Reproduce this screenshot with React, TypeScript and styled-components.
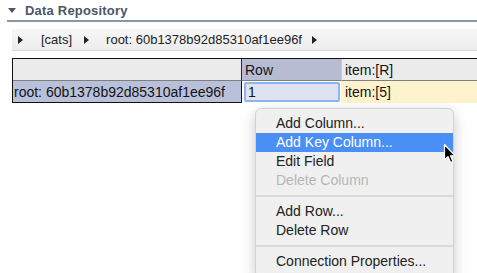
import React from "react";
import styled, { createGlobalStyle } from "styled-components";

const Global = createGlobalStyle`
  html, body { margin: 0; padding: 0; background: #ffffff; }
  body { font-family: "Liberation Sans", Arial, sans-serif; color: #1e1e1e; }
`;

const Page = styled.div`
  position: relative;
  width: 477px;
  height: 273px;
  overflow: hidden;
  background: #fff;
`;

const SectionHeader = styled.div`
  display: flex;
  align-items: center;
  gap: 9px;
  height: 22px;
  margin-left: 7px;
  padding-left: 1px;
  border-bottom: 2px solid #8b97a5;
  box-sizing: border-box;
  padding-top: 1px;
`;

const SectionTitle = styled.span`
  font-size: 13px;
  font-weight: 700;
  color: #4b5565;
  letter-spacing: 0.2px;
`;

const Breadcrumb = styled.div`
  display: flex;
  align-items: center;
  height: 22px;
  margin: 7px 0 0 12px;
  padding-left: 6px;
  background: linear-gradient(#f7f7f7, #ededed);
  border-bottom: 1px solid #d4d4d4;
  box-sizing: border-box;
  font-size: 13px;
  color: #222;
`;

const Crumb = styled.span<{ $gap: number }>`
  margin-left: ${(p) => p.$gap}px;
`;

const Arrow = styled.span<{ $gap: number }>`
  margin-left: ${(p) => p.$gap}px;
  width: 0;
  height: 0;
  border-top: 4px solid transparent;
  border-bottom: 4px solid transparent;
  border-left: 5px solid #222;
`;

const Table = styled.div`
  display: grid;
  grid-template-columns: 228px 100px 1fr;
  margin: 7px 0 0 12px;
  border-top: 1px solid #111;
  border-left: 1px solid #111;
  font-size: 14px;
  color: #141414;
`;

const HeadCell = styled.div<{ $tone?: "col" | "plain"; $sep?: "dark" | "light" | "none" }>`
  height: 22px;
  box-sizing: border-box;
  display: flex;
  align-items: center;
  padding-left: 3px;
  background: ${(p) => (p.$tone === "col" ? "#b7bcd3" : "#ebebeb")};
  border-bottom: 1px solid #7f7f7f;
  border-left: ${(p) =>
    p.$sep === "dark" ? "1px solid #2a2a2a" : p.$sep === "light" ? "1px solid #c8c8c8" : "none"};
`;

const RowCell = styled.div<{ $kind: "key" | "edit" | "value" }>`
  height: 22px;
  box-sizing: border-box;
  display: flex;
  align-items: center;
  padding-left: ${(p) => (p.$kind === "key" ? 1 : 4)}px;
  background: ${(p) =>
    p.$kind === "key" ? "#b9c0d9" : p.$kind === "value" ? "#fef3cc" : "#ffffff"};
  border-bottom: ${(p) => (p.$kind === "key" ? "1px solid #111" : "none")};
  border-left: ${(p) => (p.$kind === "edit" ? "1px solid #111" : "none")};
`;

const EditBox = styled.div`
  flex: 1;
  align-self: stretch;
  margin: 1px 1px 1px -2px;
  border: 2px solid #8db6ef;
  border-radius: 2px;
  background: #dfe3f1;
  display: flex;
  align-items: center;
  padding-left: 2px;
`;

const Menu = styled.div`
  position: absolute;
  left: 255px;
  top: 108px;
  width: 199px;
  padding-top: 5px;
  padding-bottom: 6px;
  background: #f0f0f0;
  border: 1px solid #d2d2d2;
  border-radius: 6px;
  box-shadow: 0 5px 14px rgba(0, 0, 0, 0.22);
  font-size: 14px;
  box-sizing: border-box;
`;

const Item = styled.div<{ $active?: boolean; $disabled?: boolean }>`
  height: 19px;
  line-height: 19px;
  padding-left: 20px;
  background: ${(p) => (p.$active ? "#4a8ff6" : "transparent")};
  color: ${(p) => (p.$active ? "#ffffff" : p.$disabled ? "#b6b6b6" : "#222222")};
`;

const Separator = styled.div`
  height: 2px;
  background: #dadada;
  margin: 5px 0 5px;
`;

const Cursor = styled.svg`
  position: absolute;
  left: 443px;
  top: 143px;
`;

const DownTri = () => (
  <svg width="8" height="5" viewBox="0 0 8 5">
    <path d="M0 0 L8 0 L4 5 Z" fill="#4b5565" />
  </svg>
);

export default function App() {
  return (
    <Page>
      <Global />
      <SectionHeader>
        <DownTri />
        <SectionTitle>Data Repository</SectionTitle>
      </SectionHeader>
      <Breadcrumb>
        <Arrow $gap={0} />
        <Crumb $gap={18}>[cats]</Crumb>
        <Arrow $gap={12} />
        <Crumb $gap={17}>root: 60b1378b92d85310af1ee96f</Crumb>
        <Arrow $gap={10} />
      </Breadcrumb>
      <Table>
        <HeadCell />
        <HeadCell $tone="col" $sep="dark">Row</HeadCell>
        <HeadCell $sep="light">item:[R]</HeadCell>
        <RowCell $kind="key">root: 60b1378b92d85310af1ee96f</RowCell>
        <RowCell $kind="edit">
          <EditBox>1</EditBox>
        </RowCell>
        <RowCell $kind="value">item:[5]</RowCell>
      </Table>
      <Menu>
        <Item>Add Column...</Item>
        <Item $active>Add Key Column...</Item>
        <Item>Edit Field</Item>
        <Item $disabled>Delete Column</Item>
        <Separator />
        <Item>Add Row...</Item>
        <Item>Delete Row</Item>
        <Separator />
        <Item>Connection Properties...</Item>
      </Menu>
      <Cursor width="14" height="22" viewBox="0 0 14 22">
        <path
          d="M1.5 1.5 L1.5 17 L5 13.6 L7.6 19.5 L10 18.5 L7.5 12.8 L12.2 12.8 Z"
          fill="#000"
          stroke="#fff"
          strokeWidth="1.2"
          strokeLinejoin="round"
        />
      </Cursor>
    </Page>
  );
}
